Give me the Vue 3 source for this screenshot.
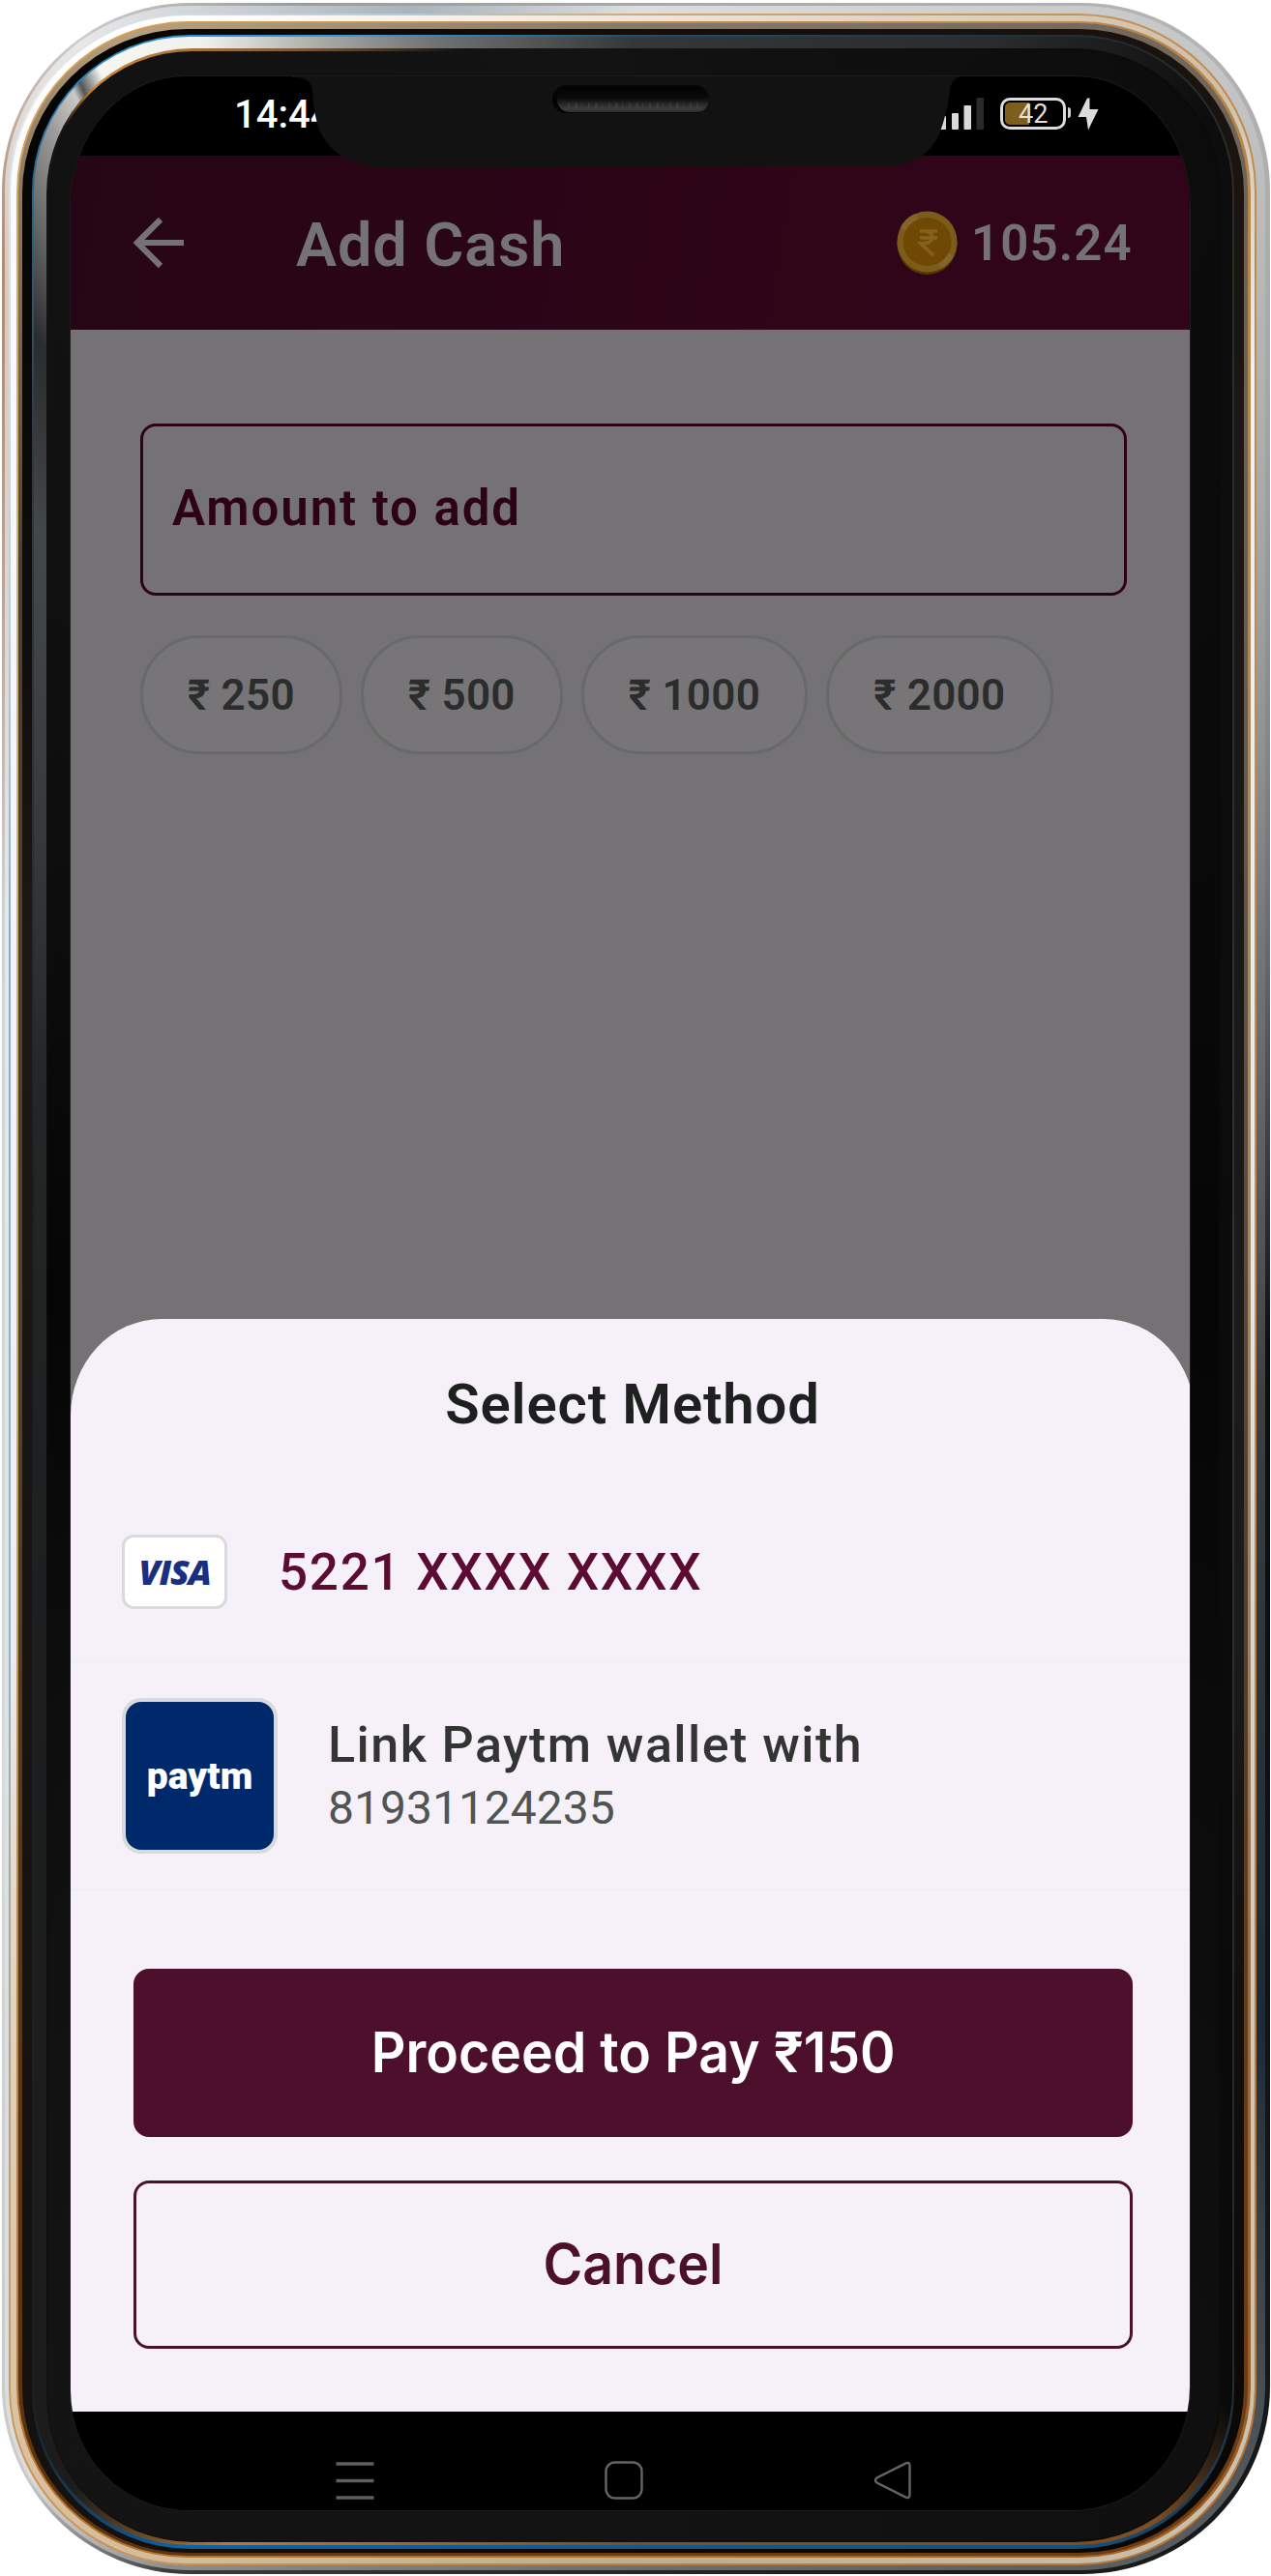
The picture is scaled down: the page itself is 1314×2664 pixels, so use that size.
<script setup>
// Metal and glass rings of the handset, outermost first.
// box: top, right, bottom, left edge; stops: colours going clockwise from the top.
const W = 1314
const H = 2664
const rings = [
  { box: [3, 1313, 2662, 2], stops: '#a9a9a7 0deg, #b4b4b2 24deg, #a8aaaa 34deg, #6b6f70 60deg, #0c1013 95deg, #0c1013 120deg, #15181a 150deg, #1d1d1d 170deg, #3a3a3a 200deg, #c9caca 207deg, #d6dada 230deg, #cfd4d8 300deg, #b08a72 328deg, #cfcccc 336deg, #9c9c9a 345deg, #a9a9a7 360deg' },
  { box: [6, 1308, 2658, 5], stops: '#dcdddf 0deg, #c4c5c5 26deg, #b2b4b4 34deg, #75797b 60deg, #3c4042 100deg, #1b2c38 140deg, #565a5c 154deg, #6e6f6c 180deg, #8b8d8a 200deg, #dcdcdc 207deg, #dde2e2 235deg, #e4eaee 300deg, #d8cbc2 328deg, #e8e8ea 336deg, #a8b4bc 350deg, #dcdddf 360deg' },
  { box: [14, 1299, 2653, 9], stops: '#d2a878 0deg, #c08a50 26deg, #c98a4a 90deg, #b87434 154deg, #b98044 180deg, #d09658 206deg, #8fb4cc 240deg, #86aeca 300deg, #e8e8ea 334deg, #b7c9d6 350deg, #d2a878 360deg' },
  { box: [16, 1297, 2651, 11], stops: '#efe6da 0deg, #cdbfa8 26deg, #eef1f2 34deg, #e2e8ec 90deg, #c9c0ae 154deg, #bcae8e 180deg, #d8c0a0 206deg, #eceeec 240deg, #f6f7f7 320deg, #ffffff 340deg, #efe6da 360deg' },
  { box: [22, 1293, 2645, 17], stops: '#c08a50 0deg, #b98548 26deg, #a58a68 60deg, #a08060 120deg, #9c5c22 154deg, #b06c28 180deg, #b8742f 206deg, #d2a468 260deg, #d8ae78 320deg, #d59b52 340deg, #c08a50 360deg' },
  { box: [24, 1290, 2643, 19], stops: '#85796a 0deg, #6f6558 26deg, #5d564c 60deg, #4a4138 120deg, #6a3c14 154deg, #6e3c12 180deg, #5a3410 206deg, #4d4236 260deg, #4a4036 320deg, #b7a07f 338deg, #85796a 360deg' },
  { box: [30, 1286, 2640, 23], stops: '#180c03 0deg, #1a1816 40deg, #1d1b19 120deg, #0a0705 154deg, #0e0906 180deg, #15110e 206deg, #1c1815 300deg, #050505 334deg, #180c03 360deg' },
  { box: [36, 1276, 2636, 33], stops: '#1d4f74 0deg, #20303a 18deg, #2b2b2b 26deg, #333 90deg, #202a30 150deg, #14507c 160deg, #0f62a4 200deg, #1c2124 208deg, #1c1f20 280deg, #2b3b44 325deg, #2b86bd 336deg, #3b9ad4 348deg, #1d4f74 360deg' },
  { box: [38, 1274, 2632, 35], stops: '#33383a 0deg, #2a2c2d 16deg, #0d0d0d 26deg, #0a0a0a 152deg, #7c4e24 157deg, #7c4e24 180deg, #b87838 198deg, #1c1c1c 205deg, #1d1e1f 240deg, #242627 290deg, #454849 322deg, #2b2c2d 328deg, #9a9a9a 333.4deg, #c9c9c6 335deg, #555 335.4deg, #f6f6f2 336.4deg, #f0f0ee 341deg, #a9a9a6 346deg, #6f7271 351deg, #33383a 360deg' },
  { box: [50, 1262, 2629, 48], stops: '#131313 0deg, #0a0a0a 26deg, #0a0a0a 150deg, #111 180deg, #111 206deg, #080808 270deg, #111 325deg, #1a1410 334deg, #d08a38 336deg, #7c5a38 345deg, #131313 352deg' },
  { box: [53, 1260, 2627, 50], stops: '#121212 0deg, #0c0c0c 26deg, #050505 90deg, #0f0f0f 154deg, #131313 180deg, #141414 206deg, #050505 270deg, #111 325deg, #131313 360deg' },
]
const ringStyle = ({ box: [t, r, b, l], stops }) => {
  const inset = (t + (W - r) + (H - b) + l) / 4
  return {
    inset: `${t}px ${W - r}px ${H - b}px ${l}px`,
    borderRadius: `${(196 - inset * 0.98).toFixed(1)}px`,
    background: `conic-gradient(${stops})`,
  }
}

const amounts = ['₹ 250', '₹ 500', '₹ 1000', '₹ 2000']
</script>

<template>
  <div class="phone">
    <div v-for="(ring, i) in rings" :key="i" class="ring" :style="ringStyle(ring)"></div>

    <div class="screen">
      <div class="status">
        <span class="clock">14:44</span>
        <div class="indicators">
          <svg width="46" height="33" viewBox="0 0 46 33">
            <rect x="0" y="19" width="7" height="14" rx="1" fill="#d9d9d9" />
            <rect x="13" y="16" width="7" height="17" rx="1" fill="#d9d9d9" />
            <rect x="25.500" y="8" width="7.500" height="25" rx="1" fill="#d9d9d9" />
            <rect x="38.500" y="0" width="7.500" height="33" rx="1" fill="#2a2a2a" />
          </svg>
          <div class="battery"><span class="charge"></span><span class="level">42</span></div>
          <span class="nub"></span>
          <svg class="bolt" width="22" height="34" viewBox="0 0 22 34">
            <path d="M10 0.500 L0.500 20 H9 L11 33.500 L21.500 12 H12.500 V0.500 Z" fill="#dcdcdc" />
          </svg>
        </div>
      </div>

      <header class="bar">
        <svg class="back" width="52" height="52" viewBox="0 0 52 52">
          <path d="M28 2 L4 26 L28 50 M4 26 H52" fill="none" stroke="#757275" stroke-width="6.200" />
        </svg>
        <h1 class="title">Add Cash</h1>
        <svg class="coin" width="63" height="66" viewBox="0 0 63 66">
          <ellipse cx="31.500" cy="34" rx="31" ry="32" fill="#5d3503" />
          <ellipse cx="31.500" cy="32" rx="31" ry="31.500" fill="#7c5c1a" />
          <path d="M4 17 A31 31 0 0 1 19 3 L23 10 A24 24 0 0 0 10 21 Z M59 47 A31 31 0 0 1 46 60 L42 53 A24 24 0 0 0 53 43 Z" fill="#846529" />
          <circle cx="31.500" cy="32" r="25" fill="#6f4903" />
          <path d="M24 21 H42 M24 28 H42 M24 21 H30 Q37 22 37 28 Q36 34 25 34 L38 46" fill="none" stroke="#856020" stroke-width="3.400" />
        </svg>
        <span class="balance">105.24</span>
      </header>

      <main class="body">
        <div class="field">Amount to add</div>
        <div class="chips">
          <button v-for="a in amounts" :key="a" class="chip">{{ a }}</button>
        </div>
      </main>

      <section class="sheet">
        <h2 class="heading">Select Method</h2>
        <div class="method card">
          <div class="visa"><span class="visa-mark">VISA</span></div>
          <span class="number">5221 XXXX XXXX</span>
        </div>
        <div class="method wallet">
          <div class="paytm"><span class="paytm-mark">paytm</span></div>
          <div class="lines">
            <span class="link">Link Paytm wallet with</span>
            <span class="mobile">81931124235</span>
          </div>
        </div>
        <div class="actions">
          <button class="btn primary"><span>Proceed to Pay ₹150</span></button>
          <button class="btn outline"><span>Cancel</span></button>
        </div>
      </section>

      <nav class="nav">
        <svg width="40" height="40" viewBox="0 0 40 40"><path d="M0.500 3 H39.500 M0.500 20.500 H39.500 M0.500 38 H39.500" stroke="#5f5d5f" stroke-width="3.600" /></svg>
        <svg width="40" height="40" viewBox="0 0 40 40"><rect x="1.500" y="1.500" width="37" height="37" rx="9" fill="none" stroke="#666466" stroke-width="2.400" /></svg>
        <svg width="40" height="40" viewBox="0 0 40 40"><path d="M33 2.600 Q37.500 0.500 37.500 5 V35 Q37.500 39.500 33 37.400 L3.500 22.500 Q0.500 20 3.500 17.500 Z" fill="none" stroke="#666466" stroke-width="2.400" /></svg>
      </nav>

      <svg class="notch" width="700" height="96" viewBox="0 0 700 96">
        <defs>
          <linearGradient id="slot" x1="0" y1="0" x2="0" y2="1">
            <stop offset="0" stop-color="#020202" />
            <stop offset="0.450" stop-color="#0b0b0c" />
            <stop offset="0.850" stop-color="#3c3c3d" />
            <stop offset="1" stop-color="#3a2a22" />
          </linearGradient>
        </defs>
        <path d="M0 -2 V1 H2 C14 1 20 5 21 15 C22 32 24 42 27 52 C36 78 62 94 98 94 L616 93 C645 93 664 76 671 54 C676 40 679 24 680 14 C682 3 688 -1 699 -1 V-2 Z" fill="#121212" />
        <rect x="269" y="9" width="162" height="29" rx="14.500" fill="#040404" />
        <rect x="274" y="11" width="157" height="26" rx="13" fill="url(#slot)" />
        <path d="M285 30 H420" stroke="#5a5d5f" stroke-width="6" stroke-dasharray="2 5 3 4 1 6" opacity="0.250" />
      </svg>
    </div>
  </div>
</template>

<style>
body { margin: 0; background: #fff; }
</style>

<style scoped>
.phone {
  position: relative;
  box-sizing: border-box;
  width: 1314px;
  height: 2664px;
  padding: 79px 84px 68px 73px;
  overflow: hidden;
  font-family: Roboto, "Liberation Sans", sans-serif;
}
.ring { position: absolute; }
.screen {
  position: relative;
  display: flex;
  flex-direction: column;
  height: 2517px;
  border-radius: 118px 118px 122px 122px / 134px 134px 128px 124px;
  overflow: hidden;
  background: #000;
  box-shadow: 0 0 0 1px #1c1c1c;
}
.status {
  display: flex;
  justify-content: space-between;
  flex: none;
  height: 82px;
  padding: 0 94px 0 169px;
  color: #fff;
}
.clock { font-size: 40px; line-height: 79px; font-weight: 500; }
.indicators { display: flex; height: 34px; margin-top: 22px; }
.battery {
  position: relative;
  box-sizing: border-box;
  width: 68px;
  height: 33px;
  margin-left: 17px;
  border: 3px solid #dcdcdc;
  border-radius: 10px;
}
.charge { position: absolute; left: 2px; top: 2px; width: 25px; height: 23px; border-radius: 5px 0 0 5px; background: #7b5f1a; }
.level { position: absolute; left: 16px; top: 0; font-size: 27px; line-height: 28px; color: #eadfd2; }
.nub { width: 3px; height: 11px; margin: 10px 0 0 2px; border-radius: 0 3px 3px 0; background: #d0d0d0; }
.bolt { margin-left: 7px; }
.bar {
  display: flex;
  align-items: center;
  flex: none;
  height: 180px;
  background: linear-gradient(100deg, #260614 0%, #2b0517 40%, #310519 75%);
  color: #757275;
}
.back { margin-left: 65px; }
.title { flex: 1; margin: 6px 0 0 116px; font-size: 63px; font-weight: 600; line-height: 74px; letter-spacing: 0.900px; }
.coin { margin-right: 14px; }
.balance { width: 226px; margin-top: 2px; font-size: 51px; font-weight: 600; line-height: 60px; letter-spacing: 1.100px; white-space: nowrap; }
.body {
  display: flex;
  flex-direction: column;
  flex: none;
  box-sizing: border-box;
  height: 1140px;
  padding: 97px 0 0 72px;
  background: #757275;
}
.field {
  box-sizing: border-box;
  display: flex;
  align-items: center;
  width: 1020px;
  height: 178px;
  padding: 0 0 3px 30px;
  border: 3px solid #2e0216;
  border-radius: 16px;
  color: #2e0216;
  font-size: 51px;
  font-weight: 600;
  letter-spacing: 1.900px;
}
.chips { display: flex; gap: 19px; margin-top: 41px; }
.chip {
  box-sizing: border-box;
  height: 123px;
  padding: 1px 46px 0;
  border: 3px solid #686a69;
  border-radius: 61px;
  background: #777577;
  font: 600 44px Roboto, sans-serif;
  letter-spacing: 0.300px;
  color: #2b2d2c;
}
.sheet {
  flex: none;
  box-sizing: border-box;
  height: 1130px;
  margin: -117px -5px 0 0;
  border-radius: 94px 94px 0 0 / 100px 100px 0 0;
  background: #f6f1f9;
}
.heading {
  box-sizing: border-box;
  height: 180px;
  margin: 0;
  padding-top: 54px;
  text-align: center;
  font-size: 58px;
  line-height: 68px;
  font-weight: 600;
  letter-spacing: 0.850px;
  color: #1e201f;
}
.method { box-sizing: border-box; display: flex; align-items: center; padding-left: 53px; border-bottom: 3px solid #f1eff3; }
.card { height: 176px; padding-bottom: 10px; }
.visa {
  box-sizing: border-box;
  display: flex;
  justify-content: center;
  align-items: center;
  width: 109px;
  height: 77px;
  border: 3px solid #d9dbda;
  border-radius: 12px;
  background: #fff;
}
.visa-mark { font: italic 800 36px "Open Sans", sans-serif; color: #1b2f80; letter-spacing: -1.200px; }
.number { margin-left: 53px; font-size: 53px; letter-spacing: 1.700px; color: #5c0b33; font-weight: 500; }
.wallet { height: 236px; }
.paytm {
  box-sizing: border-box;
  display: flex;
  justify-content: center;
  align-items: center;
  width: 161px;
  height: 161px;
  border: 4px solid #d7dbdc;
  border-radius: 20px;
  background: #00296b;
}
.paytm-mark { font: 900 39px Roboto, sans-serif; color: #fff; }
.lines { display: flex; flex-direction: column; margin-left: 52px; }
.link { font-size: 52px; line-height: 66px; font-weight: 500; letter-spacing: 1.450px; color: #333534; }
.mobile { font-size: 48px; line-height: 64px; color: #505452; }
.actions { display: flex; flex-direction: column; gap: 45px; padding: 80px 64px 0 65px; }
.btn {
  box-sizing: border-box;
  height: 174px;
  padding: 0 0 3px;
  border: 3px solid #4c102d;
  border-radius: 16px;
  font: 600 58px Inter, sans-serif;
}
.btn span { display: inline-block; transform: scaleX(0.955); }
.primary { background: #4c102d; color: #fff; }
.outline { background: transparent; color: #4c102d; }
.nav { display: flex; flex: none; gap: 238px; height: 51px; padding: 51px 0 0 274px; background: #000; }
.notch { position: absolute; left: 229px; top: 0; }
</style>
